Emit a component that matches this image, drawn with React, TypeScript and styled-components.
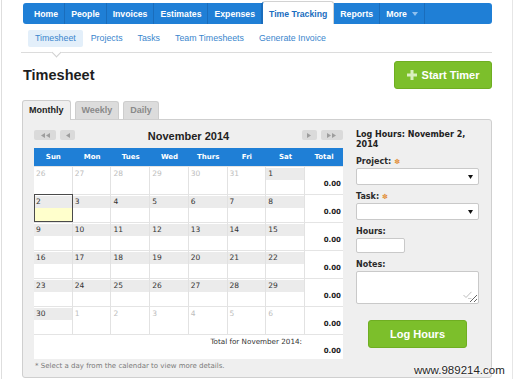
import { Fragment } from "react";
import styled, { createGlobalStyle, css } from "styled-components";

const GlobalStyle = createGlobalStyle`
  html, body {
    margin: 0;
    padding: 0;
    background: #fff;
  }
  body {
    font-family: "Liberation Sans", Arial, sans-serif;
  }
`;

const verdana = `"DejaVu Sans", Verdana, sans-serif`;
const blue = "#1f7fd6";
const green = "#7cbf2b";

const Frame = styled.div`
  position: relative;
  box-sizing: border-box;
  width: 512px;
  height: 379px;
  margin-left: 1px;
  border-left: 1px solid #dedede;
  border-right: 1px solid #e6e6e6;
  overflow: hidden;
`;

const Page = styled.div`
  width: 470px;
  padding: 3px 0 0 20px;
`;

const Nav = styled.div`
  box-sizing: border-box;
  display: flex;
  align-items: flex-start;
  width: 469px;
  height: 21px;
  margin-left: 1px;
  padding-left: 5px;
  background: ${blue};
  border-radius: 3px;
`;

const NavItem = styled.div<{ $active?: boolean }>`
  box-sizing: border-box;
  display: flex;
  align-items: center;
  gap: 5px;
  height: 21px;
  padding: 0 6px;
  font-size: 8.7px;
  font-weight: bold;
  color: #fff;
  white-space: nowrap;
  border-right: 1px solid #1a6dbc;
  ${(p) =>
    p.$active &&
    css`
      margin-top: -2px;
      height: 23px;
      padding-top: 1px;
      background: #fff;
      color: #1b6ec0;
      border: 1px solid #d2d2d2;
      border-left-color: #1a6dbc;
      border-bottom: none;
      border-radius: 3px 3px 0 0;
    `}
`;

const SubNav = styled.div`
  display: flex;
  gap: 1px;
  height: 17px;
  margin: 6px 0 0 6px;
`;

const SubItem = styled.div<{ $active?: boolean }>`
  padding: 0 7px;
  line-height: 17px;
  font-size: 8.8px;
  color: #3a86cd;
  border-radius: 2px;
  background: ${(p) => (p.$active ? "#e3effa" : "transparent")};
`;

const Divider = styled.div`
  position: relative;
  width: 471px;
  margin: 5px 0 0 -1px;
  border-top: 1px solid #dcdcdc;

  &::after {
    content: "";
    position: absolute;
    left: 32px;
    top: -4px;
    width: 6px;
    height: 6px;
    background: #fff;
    border-right: 1px solid #d0d0d0;
    border-bottom: 1px solid #d0d0d0;
    transform: rotate(45deg);
  }
`;

const TitleRow = styled.div`
  display: flex;
  align-items: center;
  justify-content: space-between;
  height: 28px;
  margin-top: 8px;
`;

const Title = styled.h1`
  margin: 0 0 0 1px;
  font-size: 14.5px;
  line-height: 17px;
  font-weight: bold;
  color: #1e1e1e;
`;

const GreenButton = styled.div<{ $width: number }>`
  box-sizing: border-box;
  display: flex;
  align-items: center;
  justify-content: center;
  gap: 5px;
  width: ${(p) => p.$width}px;
  height: 28px;
  background: ${green};
  border: 1px solid #6fae22;
  border-radius: 3px;
  color: #fff;
  font-size: 11px;
  font-weight: bold;
`;

const TabRow = styled.div`
  display: flex;
  align-items: flex-end;
  gap: 4px;
  height: 19px;
  margin-top: 11px;
`;

const Tab = styled.div<{ $active?: boolean }>`
  position: relative;
  z-index: 1;
  box-sizing: border-box;
  height: ${(p) => (p.$active ? 20 : 18)}px;
  margin-bottom: ${(p) => (p.$active ? -1 : 0)}px;
  padding: 0 6px;
  line-height: ${(p) => (p.$active ? 19 : 16)}px;
  font-size: 9px;
  font-weight: bold;
  color: ${(p) => (p.$active ? "#222" : "#8a8a8a")};
  background: ${(p) => (p.$active ? "#efefef" : "#dcdcdc")};
  border: 1px solid #cdcdcd;
  border-bottom: none;
  border-radius: 3px 3px 0 0;
`;

const Panel = styled.div`
  box-sizing: border-box;
  display: flex;
  gap: 13px;
  width: 470px;
  height: 259px;
  padding: 10px 12px 0 11px;
  background: #efefef;
  border: 1px solid #cfcfcf;
  border-radius: 0 3px 3px 3px;
`;

const CalendarCol = styled.div`
  width: 309px;
`;

const CalHead = styled.div`
  display: flex;
  align-items: flex-start;
  justify-content: space-between;
  height: 18px;
`;

const PagerGroup = styled.div`
  display: flex;
  gap: 4px;
`;

const PagerBtn = styled.div<{ $width: number }>`
  display: flex;
  align-items: center;
  justify-content: center;
  gap: 1px;
  width: ${(p) => p.$width}px;
  height: 10px;
  background: #dadada;
  border-radius: 2px;
`;

const MonthTitle = styled.div`
  font-size: 11px;
  line-height: 12px;
  font-weight: bold;
  color: #222;
`;

const CalGrid = styled.div`
  display: grid;
  grid-template-columns: repeat(7, 1fr) 38px;
  grid-template-rows: 18px repeat(6, 28px) 25px;
  width: 309px;
  background: #fff;
`;

const HeadCell = styled.div`
  background: ${blue};
  color: #fff;
  font: bold 7px/18px ${verdana};
  text-align: center;
`;

const DayCell = styled.div<{ $selected?: boolean }>`
  box-sizing: border-box;
  display: flex;
  flex-direction: column;
  padding-top: 1px;
  background: #fff;
  border-top: 1px solid #e4e4e4;
  border-right: 1px solid #e2e2e2;
  ${(p) =>
    p.$selected &&
    css`
      outline: 1px solid #4a4a4a;
      outline-offset: -1px;
    `}
`;

const DayNum = styled.div<{ $out?: boolean }>`
  height: 12px;
  padding-left: 2px;
  font: 7.5px/12px ${verdana};
  color: ${(p) => (p.$out ? "#bdbdbd" : "#333")};
  background: ${(p) => (p.$out ? "#fff" : "#ebebeb")};
`;

const DayBody = styled.div<{ $selected?: boolean }>`
  flex: 1;
  background: ${(p) => (p.$selected ? "#ffffcc" : "#fff")};
`;

const TotalCell = styled.div<{ $pad: number }>`
  box-sizing: border-box;
  display: flex;
  align-items: flex-end;
  justify-content: flex-end;
  padding: 0 2px ${(p) => p.$pad}px 0;
  border-top: 1px solid #e4e4e4;
  font: bold 7px/9px ${verdana};
  color: #222;
`;

const TotalLabel = styled.div`
  grid-column: span 7;
  box-sizing: border-box;
  padding: 2px 3px 0 0;
  border-top: 1px solid #e4e4e4;
  text-align: right;
  font: 7.2px/9px ${verdana};
  color: #333;
`;

const Footnote = styled.div`
  margin-top: 3px;
  padding-left: 1px;
  font: 7px/8px ${verdana};
  color: #7a7a7a;
`;

const Form = styled.div`
  display: flex;
  flex-direction: column;
  width: 123px;
`;

const FormHeading = styled.div`
  font: bold 8px/10px ${verdana};
  color: #222;
`;

const Field = styled.div`
  display: flex;
  flex-direction: column;
  gap: 1px;
  margin-top: 7px;
`;

const Label = styled.div`
  height: 10px;
  font: bold 8px/10px ${verdana};
  color: #2a2a2a;
`;

const Req = styled.span`
  margin-left: 3px;
  font-size: 7px;
  color: #e2913d;
`;

const SelectBox = styled.div`
  box-sizing: border-box;
  display: flex;
  align-items: center;
  justify-content: flex-end;
  height: 17px;
  padding-right: 5px;
  background: #fff;
  border: 1px solid #c9c9c9;
  border-radius: 2px;
`;

const HoursInput = styled.input`
  box-sizing: border-box;
  width: 49px;
  height: 15px;
  margin: 0;
  padding: 0;
  background: #fff;
  border: 1px solid #c9c9c9;
  border-radius: 2px;
`;

const NotesWrap = styled.div`
  position: relative;
  height: 33px;
`;

const Notes = styled.textarea`
  box-sizing: border-box;
  display: block;
  width: 123px;
  height: 33px;
  margin: 0;
  padding: 0;
  background: #fff;
  border: 1px solid #c9c9c9;
  border-radius: 2px;
  resize: both;
`;

const NotesBadge = styled.svg`
  position: absolute;
  right: 7px;
  bottom: 5px;
`;

const LogRow = styled.div`
  display: flex;
  justify-content: center;
  margin-top: 16px;
`;

const Watermark = styled.div`
  position: absolute;
  left: 412px;
  top: 364px;
  font-size: 11.5px;
  color: #262626;
  text-shadow: 0 0 2px #fff, 0 0 2px #fff;
`;

const Tri = ({ dir }: { dir: "l" | "r" }) => (
  <svg width="4" height="5" viewBox="0 0 4 5">
    <path d={dir === "l" ? "M4 0 L0 2.5 L4 5 Z" : "M0 0 L4 2.5 L0 5 Z"} fill="#9d9d9d" />
  </svg>
);

const Caret = () => (
  <svg width="5" height="4" viewBox="0 0 5 4">
    <path d="M0 0 L5 0 L2.5 4 Z" fill="#111" />
  </svg>
);

type Day = { n: number; out?: boolean; selected?: boolean };

const range = (a: number, b: number): Day[] => {
  const list: Day[] = [];
  for (let n = a; n <= b; n++) list.push({ n });
  return list;
};

const weeks: Day[][] = [
  [
    { n: 26, out: true },
    { n: 27, out: true },
    { n: 28, out: true },
    { n: 29, out: true },
    { n: 30, out: true },
    { n: 31, out: true },
    { n: 1 },
  ],
  range(2, 8).map((d) => ({ ...d, selected: d.n === 2 })),
  range(9, 15),
  range(16, 22),
  range(23, 29),
  [
    { n: 30 },
    { n: 1, out: true },
    { n: 2, out: true },
    { n: 3, out: true },
    { n: 4, out: true },
    { n: 5, out: true },
    { n: 6, out: true },
  ],
];

const dayNames = ["Sun", "Mon", "Tues", "Wed", "Thurs", "Fri", "Sat", "Total"];

export default function App() {
  return (
    <>
      <GlobalStyle />
      <Frame>
        <Page>
          <Nav>
            <NavItem>Home</NavItem>
            <NavItem>People</NavItem>
            <NavItem>Invoices</NavItem>
            <NavItem>Estimates</NavItem>
            <NavItem>Expenses</NavItem>
            <NavItem $active>Time Tracking</NavItem>
            <NavItem>Reports</NavItem>
            <NavItem>
              More
              <svg width="6" height="4" viewBox="0 0 6 4">
                <path d="M0 0 L6 0 L3 4 Z" fill="#8fc0ee" />
              </svg>
            </NavItem>
          </Nav>

          <SubNav>
            <SubItem $active>Timesheet</SubItem>
            <SubItem>Projects</SubItem>
            <SubItem>Tasks</SubItem>
            <SubItem>Team Timesheets</SubItem>
            <SubItem>Generate Invoice</SubItem>
          </SubNav>
          <Divider />

          <TitleRow>
            <Title>Timesheet</Title>
            <GreenButton $width={98}>
              <svg width="10" height="10" viewBox="0 0 10 10">
                <path d="M3.5 0 H6.5 V3.5 H10 V6.5 H6.5 V10 H3.5 V6.5 H0 V3.5 H3.5 Z" fill="#d9efbf" />
              </svg>
              Start Timer
            </GreenButton>
          </TitleRow>

          <TabRow>
            <Tab $active>Monthly</Tab>
            <Tab>Weekly</Tab>
            <Tab>Daily</Tab>
          </TabRow>

          <Panel>
            <CalendarCol>
              <CalHead>
                <PagerGroup>
                  <PagerBtn $width={22}>
                    <Tri dir="l" />
                    <Tri dir="l" />
                  </PagerBtn>
                  <PagerBtn $width={15}>
                    <Tri dir="l" />
                  </PagerBtn>
                </PagerGroup>
                <MonthTitle>November 2014</MonthTitle>
                <PagerGroup>
                  <PagerBtn $width={15}>
                    <Tri dir="r" />
                  </PagerBtn>
                  <PagerBtn $width={22}>
                    <Tri dir="r" />
                    <Tri dir="r" />
                  </PagerBtn>
                </PagerGroup>
              </CalHead>

              <CalGrid>
                {dayNames.map((name) => (
                  <HeadCell key={name}>{name}</HeadCell>
                ))}
                {weeks.map((week, wi) => (
                  <Fragment key={wi}>
                    {week.map((day, di) => (
                      <DayCell key={di} $selected={day.selected}>
                        <DayNum $out={day.out}>{day.n}</DayNum>
                        <DayBody $selected={day.selected} />
                      </DayCell>
                    ))}
                    <TotalCell $pad={5}>0.00</TotalCell>
                  </Fragment>
                ))}
                <TotalLabel>Total for November 2014:</TotalLabel>
                <TotalCell $pad={3}>0.00</TotalCell>
              </CalGrid>
              <Footnote>* Select a day from the calendar to view more details.</Footnote>
            </CalendarCol>

            <Form>
              <FormHeading>Log Hours: November 2, 2014</FormHeading>
              <Field>
                <Label>
                  Project:<Req>✽</Req>
                </Label>
                <SelectBox>
                  <Caret />
                </SelectBox>
              </Field>
              <Field>
                <Label>
                  Task:<Req>✽</Req>
                </Label>
                <SelectBox>
                  <Caret />
                </SelectBox>
              </Field>
              <Field>
                <Label>Hours:</Label>
                <HoursInput />
              </Field>
              <Field>
                <Label>Notes:</Label>
                <NotesWrap>
                  <Notes />
                  <NotesBadge width="9" height="8" viewBox="0 0 9 8">
                    <path d="M0.5 4 L3 6.5 L8.5 0.8" stroke="#bdbdbd" strokeWidth="1" fill="none" />
                    <path d="M5 7.5 H8.5" stroke="#cfcfcf" strokeWidth="1" />
                  </NotesBadge>
                </NotesWrap>
              </Field>
              <LogRow>
                <GreenButton $width={99}>Log Hours</GreenButton>
              </LogRow>
            </Form>
          </Panel>
        </Page>
        <Watermark>www.989214.com</Watermark>
      </Frame>
    </>
  );
}
